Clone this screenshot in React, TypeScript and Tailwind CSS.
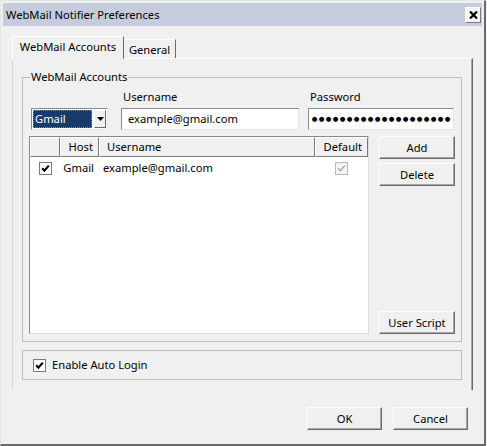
import React from "react";

const font = { fontFamily: '"Noto Sans", "Segoe UI", sans-serif' };

function Check({ disabled = false }: { disabled?: boolean }) {
  return (
    <div
      className={`w-[13px] h-[13px] flex items-center justify-center border ${
        disabled ? "border-[#b8b8b8] bg-[#f4f4f4]" : "border-[#7a7a7a] bg-white"
      }`}
    >
      <svg width="9" height="9" viewBox="0 0 9 9">
        <polyline
          points="1.2,4.2 3.4,6.6 7.8,1.6"
          fill="none"
          stroke={disabled ? "#9a9a9a" : "#000"}
          strokeWidth={disabled ? 1.3 : 2.1}
        />
      </svg>
    </div>
  );
}

function Btn({ label, className = "" }: { label: string; className?: string }) {
  return (
    <div
      className={`h-[23px] flex items-center justify-center bg-[#f0f0f0] border border-t-[#fdfdfd] border-l-[#fdfdfd] border-r-[#6b6b6b] border-b-[#6b6b6b] shadow-[inset_-1px_-1px_0_#a7a7a7] ${className}`}
    >
      {label}
    </div>
  );
}

function HeaderCell({
  label,
  className = "",
}: {
  label?: string;
  className?: string;
}) {
  return (
    <div
      className={`h-[20px] flex items-center bg-[#f0f0f0] border-t border-l border-t-white border-l-white border-r border-b border-r-[#7a7a7a] border-b-[#7a7a7a] ${className}`}
    >
      {label}
    </div>
  );
}

const dots = Array.from({ length: 20 }, (_, i) => i);

export default function App() {
  return (
    <div className="w-[487px] h-[446px] bg-[#f3f3f3] overflow-hidden text-black" style={font}>
      <div className="w-[486px] h-[446px] flex flex-col bg-[#f0f0f0] border-l border-t border-r-2 border-b-2 border-l-[#e6e6e6] border-t-[#e6e6e6] border-r-[#6a6a6a] border-b-[#6a6a6a] text-[11.2px] leading-[16px]">
        {/* Title bar */}
        <div className="mx-[2px] mt-[2px] h-[23px] bg-[#c5ccdd] flex items-center justify-between pl-[3px] pr-[1px]">
          <span className="text-[11.2px] pt-[1px]">WebMail Notifier Preferences</span>
          <div className="w-[16px] h-[16px] flex items-center justify-center bg-[#f7f7f7] border border-t-white border-l-white border-r-[#7a7a7a] border-b-[#7a7a7a]">
            <svg width="9" height="8" viewBox="0 0 9 8">
              <line x1="1" y1="0.5" x2="8" y2="7.5" stroke="#000" strokeWidth="2.2" />
              <line x1="8" y1="0.5" x2="1" y2="7.5" stroke="#000" strokeWidth="2.2" />
            </svg>
          </div>
        </div>

        {/* Body */}
        <div className="pl-[11px] pt-[10px] flex flex-col">
          {/* Tabs */}
          <div className="flex items-end h-[22px] relative z-10">
            <div className="w-[112px] h-[23px] -mb-[1px] bg-[#f0f0f0] flex items-center justify-center border-t border-l border-t-white border-l-white border-r border-r-[#6a6a6a] pb-[2px]">
              WebMail Accounts
            </div>
            <div className="w-[52px] h-[19px] flex items-center justify-center border-t border-t-white border-r border-r-[#6a6a6a] pt-[2px]">
              General
            </div>
          </div>

          {/* Panel */}
          <div className="w-[461px] h-[332px] border-t border-l border-t-white border-l-[#d8d8d8] border-r border-r-[#6a6a6a] shadow-[inset_-1px_0_0_#a8a8a8] pl-[9px] pr-[10px] pt-[10px] flex flex-col">
            <fieldset className="w-[440px] border border-[#bdbdbd] pb-[7px]">
              <legend className="ml-[7px] px-[1px] leading-[16px]">WebMail Accounts</legend>
              {/* inputs row */}
              <div className="flex pt-[4px] pl-[8px]">
                <div className="w-[77px] flex flex-col">
                  <div className="h-[16px]" />
                  <div className="mt-[3px] h-[22px] bg-white border border-t-[#8a8a8a] border-l-[#8a8a8a] border-r-[#e4e4e4] border-b-[#e4e4e4] flex items-center pl-[1px] pr-[1px] gap-[2px]">
                    <div className="w-[60px] h-[18px] bg-[#163b6a] text-white flex items-center pl-[2px] outline outline-1 outline-dotted outline-[#7d8fa8] -outline-offset-1">
                      Gmail
                    </div>
                    <div className="w-[12px] h-[18px] ml-auto bg-[#f0f0f0] border border-t-white border-l-white border-r-[#6a6a6a] border-b-[#6a6a6a] flex items-center justify-center">
                      <svg width="7" height="4" viewBox="0 0 7 4">
                        <polygon points="0,0 7,0 3.5,4" fill="#000" />
                      </svg>
                    </div>
                  </div>
                </div>
                <div className="w-[178px] ml-[13px] flex flex-col">
                  <div className="h-[16px] pl-[2px]">Username</div>
                  <div className="mt-[3px] h-[22px] bg-white border border-t-[#8a8a8a] border-l-[#8a8a8a] border-r-[#e4e4e4] border-b-[#e4e4e4] flex items-center pl-[6px]">
                    example@gmail.com
                  </div>
                </div>
                <div className="w-[146px] ml-[9px] flex flex-col">
                  <div className="h-[16px] pl-[2px]">Password</div>
                  <div className="mt-[3px] h-[22px] bg-white border border-t-[#8a8a8a] border-l-[#8a8a8a] border-r-[#e4e4e4] border-b-[#e4e4e4] flex items-center pl-[2px] overflow-hidden">
                    {dots.map((i) => (
                      <span
                        key={i}
                        className="w-[7px] shrink-0 text-center text-[6.5px] leading-[8px]"
                        style={{ fontFamily: '"DejaVu Sans", sans-serif' }}
                      >
                        ●
                      </span>
                    ))}
                  </div>
                </div>
              </div>

              {/* list + buttons */}
              <div className="flex mt-[6px] pl-[6px]">
                <div className="w-[340px] h-[198px] bg-white border border-t-[#8a8a8a] border-l-[#8a8a8a] border-r-[#dcdcdc] border-b-[#dcdcdc] flex flex-col">
                  <div className="flex">
                    <HeaderCell className="w-[30px]" />
                    <HeaderCell label="Host" className="w-[39px] justify-end pr-[5px]" />
                    <HeaderCell label="Username" className="w-[216px] pl-[7px]" />
                    <HeaderCell label="Default" className="w-[53px] justify-end pr-[5px]" />
                  </div>
                  <div className="flex items-center h-[16px] mt-[3px]">
                    <div className="w-[30px] pl-[9px]">
                      <Check />
                    </div>
                    <div className="w-[39px] text-right pr-[5px]">Gmail</div>
                    <div className="w-[216px] pl-[4px]">example@gmail.com</div>
                    <div className="w-[53px] flex justify-center pr-[1px]">
                      <Check disabled />
                    </div>
                  </div>
                </div>
                <div className="w-[76px] ml-[10px] h-[198px] flex flex-col">
                  <Btn label="Add" />
                  <Btn label="Delete" className="mt-[4px]" />
                  <Btn label="User Script" className="mt-auto" />
                </div>
              </div>
            </fieldset>

            <div className="w-[440px] h-[30px] mt-[8px] border border-[#bdbdbd] flex items-center pl-[10px]">
              <Check />
              <span className="ml-[6px]">Enable Auto Login</span>
            </div>
          </div>
        </div>

        {/* Bottom buttons */}
        <div className="flex justify-end gap-[11px] pr-[16px] mt-[17px]">
          <Btn label="OK" className="w-[75px]" />
          <Btn label="Cancel" className="w-[75px]" />
        </div>
      </div>
    </div>
  );
}
